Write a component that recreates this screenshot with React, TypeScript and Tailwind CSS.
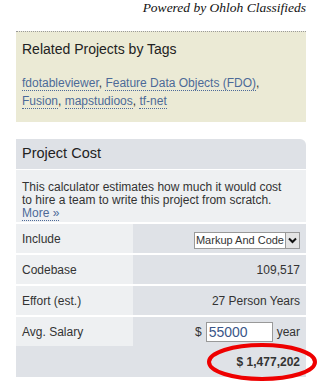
const tags = ['fdotableviewer', 'Feature Data Objects (FDO)', 'Fusion', 'mapstudioos', 'tf-net'];

const rows = [
  { label: 'Include', kind: 'select' },
  { label: 'Codebase', value: '109,517' },
  { label: 'Effort (est.)', value: '27 Person Years' },
  { label: 'Avg. Salary', kind: 'salary' },
];

export default function App() {
  return (
    <div className="w-[325px] h-[387px] bg-white text-[#333] font-['Liberation_Sans',Arial,sans-serif] overflow-hidden">
      <div className="w-[290px] ml-[16px]">
        <div className="h-[31px] pt-[1px] text-right font-['Liberation_Serif',serif] italic text-[13.5px] leading-[14px] text-[#111]">
          Powered by Ohloh Classifieds
        </div>

        <div className="h-[91px] bg-[#ebead5] border-t border-dotted border-[#9a9a9a] px-[6px] pt-[8px]">
          <h3 className="text-[14px] leading-[19px] text-[#222]">Related Projects by Tags</h3>
          <p className="mt-[15px] text-[12px] leading-[18px] text-[#4d6a98]">
            {tags.map((t, i) => (
              <span key={t}>
                <a className="border-b border-dotted border-[#4d6a98]">{t}</a>
                {i < tags.length - 1 && <span className="text-[#333]">, </span>}
                {i === 1 && <br />}
              </span>
            ))}
          </p>
        </div>

        <div className="relative mt-[17px]">
          <div className="h-[30px] bg-[#dee1e6] rounded-tr-[6px] px-[6px] flex items-center text-[14.5px] text-[#222]">
            Project Cost
          </div>
          <div className="h-[53px] bg-[#eef0f2] border-t border-white px-[6px] pt-[11px] text-[12px] leading-[13px]">
            This calculator estimates how much it would cost
            <br />
            to hire a team to write this project from scratch.
            <br />
            <a className="text-[#4d6a98] border-b border-dotted border-[#4d6a98]">More »</a>
          </div>

          {rows.map((r) => (
            <div key={r.label} className="grid grid-cols-[117px_1fr] h-[31px] border-t-2 border-white text-[12px]">
              <div className="bg-[#eef0f2] px-[6px] flex items-center">{r.label}</div>
              <div className="bg-[#dfe2e7] pr-[6px] flex items-center justify-end">
                {r.kind === 'select' && (
                  <div className="flex items-stretch h-[17px] w-[106px] mt-[4px] border border-[#999] bg-white text-[11px] whitespace-nowrap">
                    <span className="flex-1 text-right pr-[1px] leading-[15px]">Markup And Code</span>
                    <span className="w-[14px] bg-[#e4e4e4] border-l border-[#999] flex items-center justify-center">
                      <svg width="9" height="7" viewBox="0 0 9 7">
                        <path d="M1 1.5 L4.5 5 L8 1.5" stroke="#111" strokeWidth="2" fill="none" />
                      </svg>
                    </span>
                  </div>
                )}
                {r.kind === 'salary' && (
                  <div className="flex items-center gap-[4px]">
                    <span>$</span>
                    <span className="w-[67px] h-[20px] border border-[#999] bg-white px-[2px] text-[14px] leading-[18px] text-[#3a5688]">
                      55000
                    </span>
                    <span>year</span>
                  </div>
                )}
                {r.value && <span>{r.value}</span>}
              </div>
            </div>
          ))}

          <div className="h-[31px] bg-[#dfe2e7] px-[6px] flex items-center justify-end text-[12px] font-bold text-[#333]">
            $ 1,477,202
          </div>

          <svg
            className="absolute left-[190px] top-[203px] pointer-events-none"
            width="112"
            height="40"
            viewBox="0 0 112 40"
          >
            <ellipse cx="56" cy="20" rx="53" ry="17" fill="none" stroke="#ee0000" strokeWidth="4" />
          </svg>
        </div>
      </div>
    </div>
  );
}
